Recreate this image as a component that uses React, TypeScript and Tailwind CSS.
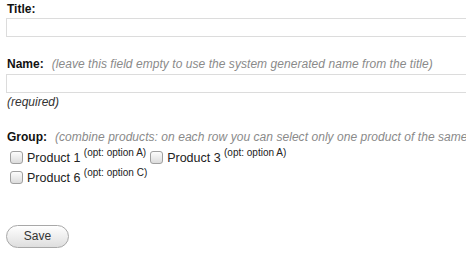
import React from 'react';

const products = [
    [
        { name: 'Product 1', opt: 'option A' },
        { name: 'Product 3', opt: 'option A' },
    ],
    [{ name: 'Product 6', opt: 'option C' }],
];

function FakeCheckbox() {
    return (
        <span className="inline-block w-[13px] h-[13px] ml-[4px] mr-[4px] rounded-[3px] border border-[#a0a0a0] bg-gradient-to-b from-[#fcfcfc] to-[#dcdcdc] align-[-2px]" />
    );
}

export default function App() {
    return (
        <div className="w-[466px] h-[258px] overflow-hidden bg-white font-['Liberation_Sans',Arial,sans-serif] text-[12px] text-[#222]">
            <div className="w-[600px] pl-[6px] pt-[1px]">
                {/* Title */}
                <div className="pl-[1px] leading-[16px] font-bold text-[#111]">Title:</div>
                <input className="block mt-[1px] w-[520px] h-[19px] border border-[#dcdcdc] bg-white outline-none" />

                {/* Name */}
                <div className="mt-[19px] pl-[1px] leading-[16px] whitespace-nowrap">
                    <span className="font-bold text-[#111]">Name:</span>
                    <span className="ml-[8px] italic text-[#8a8a8a] tracking-[0.05px]">
                        (leave this field empty to use the system generated name from the title)
                    </span>
                </div>
                <input className="block mt-[2px] w-[520px] h-[19px] border border-[#dcdcdc] bg-white outline-none" />
                <div className="mt-[1px] pl-[1px] leading-[16px] italic text-[#333]">(required)</div>

                {/* Group */}
                <div className="mt-[19px] pl-[1px] leading-[16px] whitespace-nowrap">
                    <span className="font-bold text-[#111]">Group:</span>
                    <span className="ml-[8px] italic text-[#8a8a8a] tracking-[0.05px]">
                        (combine products: on each row you can select only one product of the same
                    </span>
                </div>
                <div className="mt-[3px]">
                    {products.map((row, i) => (
                        <div key={i} className="h-[20px] leading-[20px] whitespace-nowrap">
                            {row.map((p) => (
                                <span key={p.name}>
                                    <FakeCheckbox />
                                    <span className="text-[12.5px] text-[#222]">{p.name}</span>{' '}
                                    <sup className="text-[10px] top-[-6px]">(opt: {p.opt})</sup>
                                </span>
                            ))}
                        </div>
                    ))}
                </div>

                {/* Save */}
                <button className="mt-[37px] w-[63px] h-[23px] rounded-full border border-[#a8a8a8] bg-gradient-to-b from-white to-[#dedede] text-[12px] text-[#333] leading-[21px]">
                    Save
                </button>
            </div>
        </div>
    );
}
